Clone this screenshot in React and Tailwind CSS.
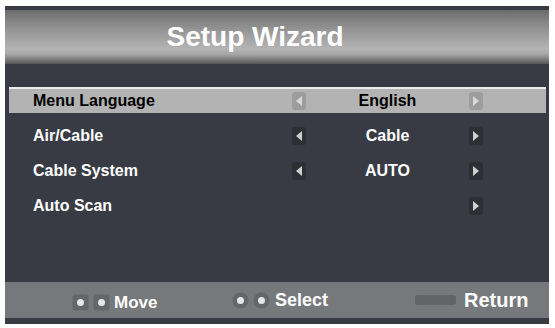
const ROWS = [
  { label: "Menu Language", value: "English", left: true, right: true, selected: true },
  { label: "Air/Cable", value: "Cable", left: true, right: true },
  { label: "Cable System", value: "AUTO", left: true, right: true },
  { label: "Auto Scan", value: "", left: false, right: true },
]

function Arrow({ dir, light }) {
  const box = light ? "#9d9d9d" : "#2d2f35"
  const tri = light ? "#d8d8d8" : "#cfcfcf"
  const pts = dir === "left" ? "10,4 4,9 10,14" : "4,4 10,9 4,14"
  return (
    <svg width="14" height="18" viewBox="0 0 14 18">
      <rect x="0" y="0" width="14" height="18" rx="3" fill={box} />
      <polygon points={pts} fill={tri} />
    </svg>
  )
}

function KeyIcon({ round }) {
  return (
    <svg width="17" height="17" viewBox="0 0 17 17">
      {round ? (
        <circle cx="8.5" cy="8.5" r="8" fill="#65666a" />
      ) : (
        <rect x="0.5" y="0.5" width="16" height="16" rx="3" fill="#65666a" />
      )}
      <circle cx="8.5" cy="8.5" r="3.5" fill="#e6e6e6" />
    </svg>
  )
}

export default function App() {
  return (
    <div className="w-[555px] h-[328px] bg-white pt-[6px] pl-[5px] font-['Liberation_Sans',Arial,sans-serif]">
      <div className="w-[544px] h-[318px] bg-[#393b44] flex flex-col">
        <div className="mt-[4px] h-[54px] flex items-center justify-center pr-[44px] bg-[linear-gradient(to_bottom,#6c6c6c_0%,#939393_35%,#b4b4b4_72%,#a6a6a6_82%,#575757_100%)]">
          <h1 className="text-white font-bold text-[28px] leading-none">Setup Wizard</h1>
        </div>

        <div className="pt-[18px]">
          {ROWS.map((r, i) => (
            <div
              key={i}
              className={`${r.selected ? "h-[36px]" : "h-[35px]"} flex items-center pl-[4px] pr-[3px]`}
            >
              <div
                className={`h-[26px] w-full flex items-center font-bold text-[16px] ${
                  r.selected
                    ? "bg-[#b3b3b3] border-t-2 border-[#ececec] text-black"
                    : "text-white"
                }`}
              >
                <span className="w-[283px] pl-[24px]">{r.label}</span>
                <span className="w-[14px] flex">{r.left && <Arrow dir="left" light={r.selected} />}</span>
                <span className="w-[163px] text-center">{r.value}</span>
                <span className="w-[14px] flex">{r.right && <Arrow dir="right" light={r.selected} />}</span>
              </div>
            </div>
          ))}
        </div>

        <div className="mt-auto mb-[6px] h-[36px] bg-[#77787c] flex items-center text-white font-bold">
          <div className="ml-[67px] w-[160px] flex items-center pt-[5px]">
            <div className="flex gap-[4px]">
              <KeyIcon />
              <KeyIcon />
            </div>
            <span className="ml-[4px] text-[17px]">Move</span>
          </div>
          <div className="w-[183px] flex items-center">
            <div className="flex gap-[4px]">
              <KeyIcon round />
              <KeyIcon round />
            </div>
            <span className="ml-[5px] text-[18px]">Select</span>
          </div>
          <div className="flex items-center">
            <div className="w-[41px] h-[10px] rounded-[3px] bg-[#636468]" />
            <span className="ml-[8px] text-[20px]">Return</span>
          </div>
        </div>
      </div>
    </div>
  )
}
